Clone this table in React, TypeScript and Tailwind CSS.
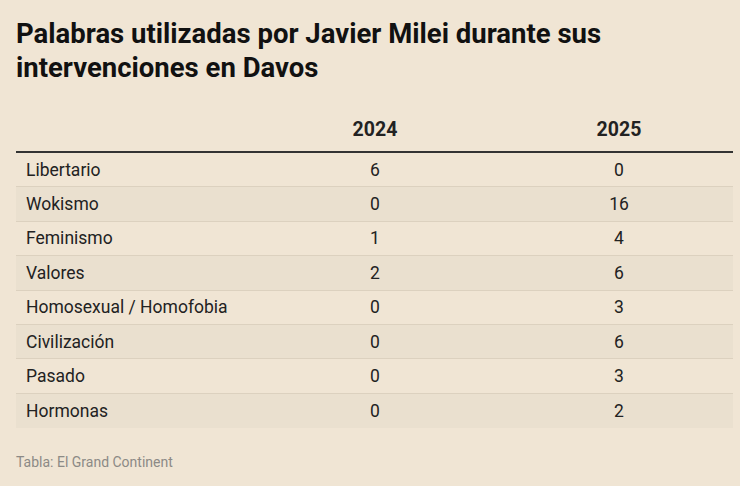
const rows: [string, number, number][] = [
  ['Libertario', 6, 0],
  ['Wokismo', 0, 16],
  ['Feminismo', 1, 4],
  ['Valores', 2, 6],
  ['Homosexual / Homofobia', 0, 3],
  ['Civilización', 0, 6],
  ['Pasado', 0, 3],
  ['Hormonas', 0, 2],
];

export default function App() {
  return (
    <div className="min-h-[486px] w-[740px] bg-[#f0e5d4] px-4 pt-[17px] font-['Roboto',sans-serif] text-[#222]">
      <h1 className="text-[27.5px] font-bold leading-[33.5px] text-[#111]">
        Palabras utilizadas por Javier Milei durante sus intervenciones en Davos
      </h1>
      <div className="mt-[24px] w-[717px]">
        <div className="grid h-[45px] grid-cols-[237px_244px_1fr] items-center border-b-2 border-[#333] text-[19.5px] font-bold text-[#222]">
          <div />
          <div className="text-center">2024</div>
          <div className="pl-2 text-center">2025</div>
        </div>
        {rows.map(([word, a, b], i) => (
          <div
            key={word}
            className={`grid h-[34.4px] grid-cols-[237px_244px_1fr] items-center text-[17.5px] ${
              i % 2 === 1 ? 'bg-[#eae0cf]' : ''
            } ${i < rows.length - 1 ? 'border-b border-[#dcd1bf]' : ''}`}
          >
            <div className="pl-[10px]">{word}</div>
            <div className="text-center">{a}</div>
            <div className="pl-2 text-center">{b}</div>
          </div>
        ))}
      </div>
      <div className="mt-[24px] text-[14px] text-[#8c8a86]">Tabla: El Grand Continent</div>
    </div>
  );
}
